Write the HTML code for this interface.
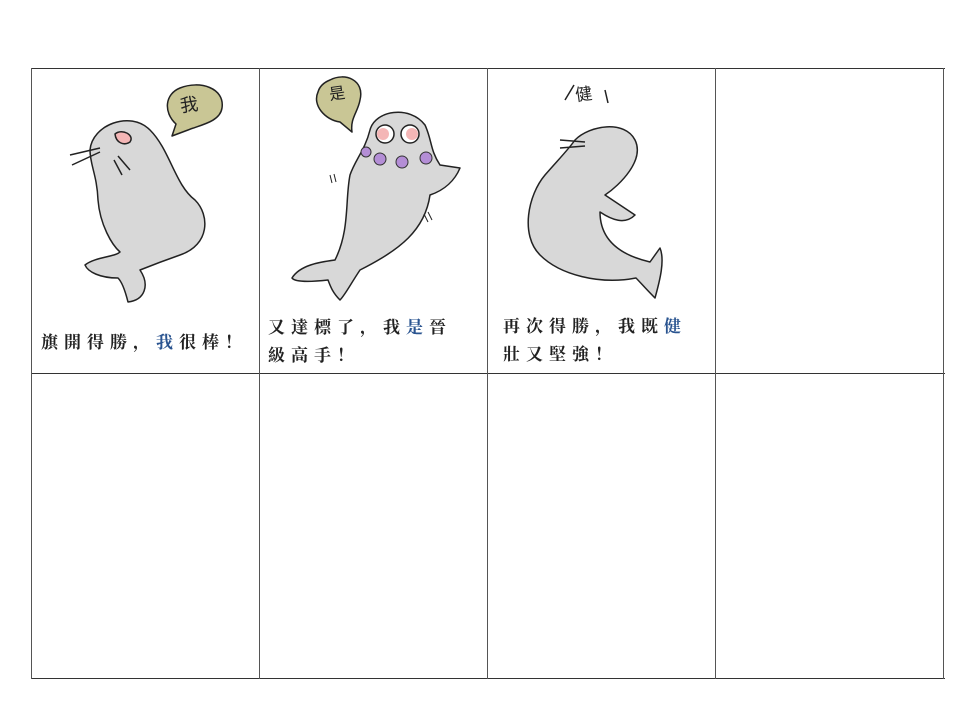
<!DOCTYPE html>
<html><head><meta charset="utf-8"><style>
body{margin:0;width:960px;height:720px;background:#fff;position:relative;overflow:hidden}
.v{position:absolute;background:#555;width:1px}
.h{position:absolute;background:#333;height:1px}
.t{position:absolute;font-family:"Liberation Serif","Noto Serif CJK SC",serif;font-weight:700;font-size:17px;letter-spacing:6px;color:#222;line-height:28px;white-space:nowrap}
.b{color:#2a5490}
.bt{position:absolute;font-family:"Noto Sans CJK TC",sans-serif;font-size:18px;color:#222;transform:rotate(-8deg)}
svg{position:absolute;left:0;top:0}
</style></head><body>
<div class="h" style="left:31px;top:68px;width:914px"></div>
<div class="h" style="left:31px;top:373px;width:914px"></div>
<div class="h" style="left:31px;top:678px;width:914px"></div>
<div class="v" style="left:31px;top:68px;height:611px"></div>
<div class="v" style="left:259px;top:68px;height:611px"></div>
<div class="v" style="left:487px;top:68px;height:611px"></div>
<div class="v" style="left:715px;top:68px;height:611px"></div>
<div class="v" style="left:943px;top:68px;height:611px"></div>

<svg width="960" height="720" stroke="#222" stroke-width="1.5" stroke-linejoin="round">
<!-- seal 1 -->
<path d="M180 88 C200 80 225 88 222 108 C220 122 200 125 188 130 L172 136 L176 124 C163 112 165 94 180 88Z" fill="#c9c695"/>
<path d="M90 150 C92 125 130 110 150 130 C170 150 175 185 195 200 C210 215 210 245 180 255 C160 262 145 268 140 270 C150 285 145 300 128 302 C125 290 122 282 118 278 C100 278 88 272 85 265 C95 257 115 257 120 252 C112 245 100 225 98 200 C97 175 90 165 90 150Z" fill="#d8d8d8"/>
<path d="M115 134 C122 128 135 135 130 142 C124 146 116 143 115 134Z" fill="#f4b6b6"/>
<path d="M70 155 L100 148 M72 165 L100 152 M118 156 L130 170 M114 160 L122 175" fill="none"/>
<!-- seal 2 -->
<path d="M330 80 C345 72 365 80 360 100 C358 112 350 118 352 132 L340 122 C325 120 312 105 318 92 C320 85 325 82 330 80Z" fill="#c9c695"/>
<path d="M370 130 C375 110 410 105 425 125 C432 140 430 150 440 165 L460 168 C455 180 445 190 430 195 C425 230 400 250 360 270 C350 285 345 295 340 300 C332 292 330 285 328 280 C310 282 295 282 292 278 C300 265 320 262 335 260 C350 230 345 200 350 175 C355 160 365 150 370 130Z" fill="#d8d8d8"/>
<circle cx="385" cy="134" r="9" fill="#fff"/><circle cx="383" cy="134" r="6" fill="#f4b6b6" stroke="none"/>
<circle cx="410" cy="134" r="9" fill="#fff"/><circle cx="412" cy="134" r="6" fill="#f4b6b6" stroke="none"/>
<g fill="#b48ed6" stroke="#333" stroke-width="1"><circle cx="366" cy="152" r="5"/><circle cx="380" cy="159" r="6"/><circle cx="402" cy="162" r="6"/><circle cx="426" cy="158" r="6"/></g>
<path d="M330 175 L332 183 M334 174 L336 182 M428 212 L432 220 M424 214 L428 222" fill="none" stroke-width="1"/>
<!-- seal 3 -->
<path d="M565 100 L574 85 M605 90 L608 103" fill="none"/>
<path d="M575 140 C590 125 625 120 635 140 C645 160 620 185 605 195 L635 215 C625 225 612 220 600 212 C600 240 620 255 650 262 L660 248 C665 260 660 280 655 298 C645 288 640 282 636 278 C600 285 560 275 540 255 C520 235 528 195 545 175 C558 160 568 150 575 140Z" fill="#d8d8d8"/>
<path d="M560 140 L585 142 M560 148 L585 146" fill="none"/>
</svg>
<div class="bt" style="left:180px;top:91px">我</div>
<div class="bt" style="left:329px;top:80px;font-size:16px">是</div>
<div class="bt" style="left:575px;top:80px;font-size:17px">健</div>

<div class="t" style="left:41px;top:329px">旗開得勝，<span class="b">我</span>很棒！</div>
<div class="t" style="left:268px;top:314px">又達標了，我<span class="b">是</span>晉<br>級高手！</div>
<div class="t" style="left:503px;top:313px">再次得勝，我既<span class="b">健</span><br>壯又堅強！</div>
</body></html>
